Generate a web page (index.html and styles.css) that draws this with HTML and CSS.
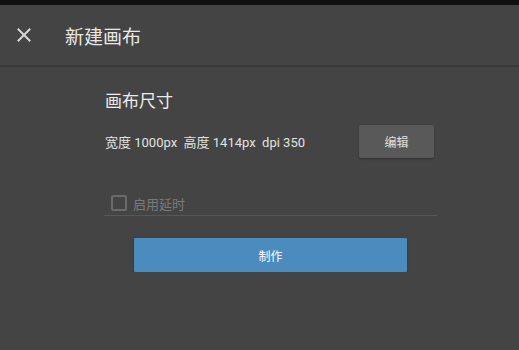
FILE: index.html
```html
<!DOCTYPE html>
<html>
  <head>
    <meta charset="UTF-8">
    <title>新建画布</title>
    <link rel="stylesheet" href="styles.css">
  </head>
  <body>
    <div class="statusbar"></div>
    <div class="header">
      <span class="close">
        <svg width="14" height="14" viewBox="0 0 14 14">
          <path d="M1.5 1.5 L12.5 12.5 M12.5 1.5 L1.5 12.5" stroke="#d8d8d8" stroke-width="2" stroke-linecap="square"/>
        </svg>
      </span>
      <span class="title">新建画布</span>
    </div>

    <div class="panel">
      <h3>画布尺寸</h3>
      <div class="size-row">
        <span class="size-text">宽度 1000px&nbsp;&nbsp;高度 1414px&nbsp;&nbsp;dpi 350</span>
        <button class="edit-btn">编辑</button>
      </div>

      <label class="delay">
        <span class="box"></span>
        <span>启用延时</span>
      </label>

      <button class="make-btn">制作</button>
    </div>
  </body>
</html>
```

FILE: styles.css
```css
body { margin: 0; background: #444444; font-family: "Noto Sans CJK SC", "Noto Sans", sans-serif; color: #e6e6e6; }
.statusbar { height: 5px; background: #111111; }
.header { height: 60px; display: flex; align-items: center; border-bottom: 2px solid #393939; }
.close { width: 14px; height: 14px; margin-left: 17px; margin-right: 34px; display: flex; }
.title { font-size: 19px; color: #e8e8e8; }
.panel { width: 333px; margin: 0 0 0 104px; padding-top: 22px; }
h3 { margin: 0 0 0 1px; font-size: 17px; font-weight: normal; line-height: 22px; color: #ececec; }
.size-row { display: flex; align-items: center; justify-content: space-between; margin-top: 14px; padding-left: 1px; padding-right: 3px; }
.size-text { font-family: Roboto, "Noto Sans CJK SC", sans-serif; font-size: 13px; color: #e2e2e2; }
.edit-btn { width: 75px; height: 33px; border: none; border-radius: 2px; background: #595959; color: #e0e0e0; font-family: inherit; font-size: 12px; box-shadow: 0 1px 2px rgba(0,0,0,0.3); }
.delay { display: flex; align-items: center; height: 24px; margin-top: 33px; padding-left: 7px; border-bottom: 1px solid #575757; font-size: 13px; color: #7a7a7a; }
.box { width: 12px; height: 12px; border: 2px solid #6a6a6a; border-radius: 2px; margin-right: 6px; }
.make-btn { display: block; width: 273px; height: 34px; margin: 22px 0 0 30px; border: none; border-radius: 1px; background: #4b8bbd; color: #ffffff; font-family: inherit; font-size: 12px; box-shadow: 0 1px 2px rgba(0,0,0,0.35); }
```
